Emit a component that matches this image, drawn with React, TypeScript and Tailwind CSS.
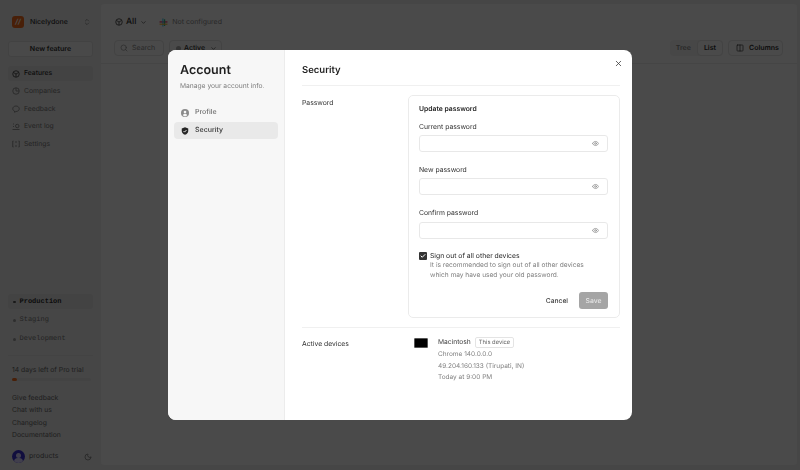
import { ChevronDown, ChevronsUpDown, Columns2, Eye, Moon, Search, X, Check } from 'lucide-react';

const navItems = ['Features', 'Companies', 'Feedback', 'Event log', 'Settings'];
const envItems = ['Production', 'Staging', 'Development'];
const helpLinks = ['Give feedback', 'Chat with us', 'Changelog', 'Documentation'];

function BoxIcon({ className }: { className?: string }) {
  return (
    <svg viewBox="0 0 16 16" fill="none" stroke="currentColor" strokeWidth="1.5" className={className}>
      <circle cx="8" cy="8" r="6.5" />
      <path d="M8 8 3 5M8 8l5-3M8 8v6" />
    </svg>
  );
}

function NavIcon({ index }: { index: number }) {
  const cls = 'h-[8px] w-[8px] shrink-0';
  if (index === 0) return <BoxIcon className={cls} />;
  if (index === 1)
    return (
      <svg viewBox="0 0 16 16" fill="none" stroke="currentColor" strokeWidth="1.5" className={cls}>
        <circle cx="8" cy="8" r="6.5" />
        <path d="M8 2v6h6" />
      </svg>
    );
  if (index === 2)
    return (
      <svg viewBox="0 0 16 16" fill="none" stroke="currentColor" strokeWidth="1.5" className={cls}>
        <path d="M8 2c3.6 0 6.5 2.4 6.5 5.6S11.6 13 8 13l-3 1.5v-2.3C2.800 11.200 1.500 9.600 1.500 7.600 1.500 4.400 4.400 2 8 2Z" />
      </svg>
    );
  if (index === 3)
    return (
      <svg viewBox="0 0 16 16" fill="none" stroke="currentColor" strokeWidth="1.5" className={cls}>
        <path d="M2 2h2M2 7h2M1 13h14" />
        <circle cx="10.500" cy="6" r="3.500" />
      </svg>
    );
  return (
    <svg viewBox="0 0 16 16" fill="none" stroke="currentColor" strokeWidth="1.500" className={cls}>
      <path d="M3 2H1.500v12H3M13 2h1.500v12H13M8 2v4M8 10v4" />
    </svg>
  );
}

function PasswordField({ label }: { label: string }) {
  return (
    <div className="flex flex-col">
      <div className="text-[6.800px] leading-[11px] text-[#303030]">{label}</div>
      <div className="mt-[3.500px] flex h-[17px] items-center justify-end rounded-[3px] border border-[#e8e8e8] bg-white pr-[8px]">
        <Eye className="h-[7px] w-[7px] text-[#8a8a8a]" strokeWidth={2.5} />
      </div>
    </div>
  );
}

export default function App() {
  return (
    <div className="relative flex h-[470px] w-[800px] overflow-hidden bg-[#eaeaea] font-['Inter',sans-serif] antialiased [text-rendering:geometricPrecision]">
      {/* Sidebar */}
      <aside className="flex w-[101px] shrink-0 flex-col px-[8px] text-[#2f2f2f]">
        <div className="mt-[16px] flex h-[12px] items-center pl-[4px] pr-[2px]">
          <div className="flex h-[12px] w-[12px] items-center justify-center rounded-[3px] bg-[#f26a1b] text-[7px] font-bold italic text-white">
            //
          </div>
          <span className="ml-[6px] text-[7px] font-medium">Nicelydone</span>
          <ChevronsUpDown className="ml-auto h-[8px] w-[8px] text-[#777]" />
        </div>
        <div className="mt-[13px] flex h-[16px] items-center justify-center rounded-[3px] border border-[#dcdcdc] bg-[#f6f6f6] text-[7px] font-semibold">
          New feature
        </div>
        <nav className="mt-[9px] flex flex-col">
          {navItems.map((item, i) => (
            <div
              key={item}
              className={`flex h-[15px] items-center gap-[4px] rounded-[3px] pl-[4px] text-[6.800px] ${i === 0 ? 'bg-[#e0e0e0] font-medium text-[#2f2f2f]' : 'text-[#777]'} ${i > 0 ? 'mt-[2.700px]' : ''}`}
            >
              <NavIcon index={i} />
              {item}
            </div>
          ))}
        </nav>
        <div className="mt-auto flex flex-col">
          {envItems.map((env, i) => (
            <div
              key={env}
              className={`flex h-[15px] items-center gap-[4px] rounded-[3px] pl-[5px] font-['Liberation_Mono',monospace] text-[7px] ${i === 0 ? 'bg-[#e0e0e0] font-bold text-[#2f2f2f]' : 'text-[#777]'} ${i > 0 ? 'mt-[3.700px]' : ''}`}
            >
              <span className={`h-[2.500px] w-[2.500px] rounded-full ${i === 0 ? 'bg-[#555]' : 'bg-[#999]'}`} />
              {env}
            </div>
          ))}
          <div className="mt-[8px] border-t border-[#e2e2e2]" />
          <div className="mt-[9.500px] pl-[4px] text-[6.800px] leading-[10px] text-[#666]">14 days left of Pro trial</div>
          <div className="ml-[4px] mr-[2px] mt-[2.500px] h-[3px] rounded-full bg-[#e2e2e2]">
            <div className="h-[3px] w-[5px] rounded-full bg-[#f26a1b]" />
          </div>
          <div className="mt-[12px] flex flex-col gap-[2.400px] pl-[4px]">
            {helpLinks.map((link) => (
              <div key={link} className="text-[6.800px] leading-[10px] text-[#666]">
                {link}
              </div>
            ))}
          </div>
          <div className="mb-[7px] mt-[10px] flex h-[13px] items-center pl-[4px] pr-[1px]">
            <span className="relative h-[13px] w-[13px] overflow-hidden rounded-full bg-[#3b2fd0]">
              <span className="absolute left-[4px] top-[2.500px] h-[5px] w-[5px] rounded-full bg-[#d9d4ff]" />
              <span className="absolute left-[2px] top-[8px] h-[8px] w-[9px] rounded-full bg-[#d9d4ff]" />
            </span>
            <span className="ml-[4px] text-[7px] text-[#666]">products</span>
            <Moon className="ml-auto h-[8px] w-[8px] text-[#666]" />
          </div>
        </div>
      </aside>

      {/* Main panel */}
      <main className="mb-[5px] mr-[3px] mt-[4px] flex flex-1 flex-col rounded-[3px] bg-[#f7f7f7] text-[#2f2f2f]">
        <div className="mt-[12px] flex h-[12px] items-center pl-[14px]">
          <BoxIcon className="h-[8px] w-[8px]" />
          <span className="ml-[3px] text-[8.500px] font-medium">All</span>
          <ChevronDown className="ml-[4px] h-[7px] w-[7px]" />
          <svg viewBox="0 0 16 16" className="ml-[12px] h-[9px] w-[9px]">
            <path d="M1 6h14v2H1z" fill="#e01e5a" />
            <path d="M6 1h2v14H6z" fill="#36c5f0" />
            <path d="M9 2h2v12H9z" fill="#2eb67d" />
            <path d="M1 10h14v2H1z" fill="#ecb22e" />
          </svg>
          <span className="ml-[4px] text-[7px] text-[#8a8a8a]">Not configured</span>
        </div>
        <div className="mt-[12px] flex h-[16px] items-center pl-[13px] pr-[14px]">
          <div className="flex h-[16px] w-[50px] items-center gap-[4px] rounded-[4px] border border-[#e0e0e0] pl-[5px] text-[7px] text-[#8a8a8a]">
            <Search className="h-[8px] w-[8px]" />
            Search
          </div>
          <div className="ml-[5px] flex h-[16px] w-[53px] items-center gap-[3px] rounded-[4px] border border-[#e0e0e0] pl-[6px] text-[7px] font-medium">
            <span className="h-[5px] w-[5px] rounded-full bg-[#aaa]" />
            Active
            <ChevronDown className="ml-[2px] h-[7px] w-[7px]" />
          </div>
          <div className="ml-auto flex h-[16px] items-center rounded-[4px] bg-[#eeeeee] text-[7px] font-semibold">
            <span className="px-[6px] text-[#8a8a8a]">Tree</span>
            <span className="flex h-[16px] items-center rounded-[4px] border border-[#e0e0e0] bg-[#f7f7f7] px-[6px]">List</span>
          </div>
          <div className="ml-[5px] flex h-[16px] w-[55px] items-center gap-[5px] rounded-[4px] border border-[#e0e0e0] pl-[7px] text-[7px] font-semibold">
            <Columns2 className="h-[8px] w-[8px]" />
            Columns
          </div>
        </div>
        <div className="mt-[7px] border-t border-[#e8e8e8]" />
      </main>

      {/* Dimmed backdrop */}
      <div className="absolute inset-0 bg-black/70 backdrop-blur-[0.5px]" />

      {/* Account dialog */}
      <div className="absolute left-[168px] top-[50px] flex h-[370px] w-[464px] overflow-hidden rounded-[8px] bg-white text-[#1f1f1f] [will-change:transform]">
        <div className="flex w-[117px] shrink-0 flex-col border-r border-[#ececec] bg-[#f7f7f7] px-[6px]">
          <div className="ml-[6px] mt-[12px] text-[12.500px] font-semibold leading-[18px]">Account</div>
          <div className="ml-[6px] mt-[1px] text-[6.700px] leading-[10px] text-[#7c7c7c]">Manage your account info.</div>
          <div className="mt-[13px] flex h-[17px] items-center gap-[6px] pl-[7px] text-[7px] font-medium text-[#6f6f6f]">
            <svg viewBox="0 0 16 16" className="h-[8px] w-[8px]">
              <circle cx="8" cy="8" r="8" fill="#8b8b8b" />
              <circle cx="8" cy="6" r="2.600" fill="#f7f7f7" />
              <path d="M3.500 12.500c1-2 2.500-3 4.500-3s3.500 1 4.500 3a6.300 6.300 0 0 1-9 0Z" fill="#f7f7f7" />
            </svg>
            Profile
          </div>
          <div className="mt-[1px] flex h-[17px] items-center gap-[6px] rounded-[4px] bg-[#e9e9e9] pl-[7px] text-[7px] font-medium text-[#333]">
            <svg viewBox="0 0 16 16" className="h-[8px] w-[8px]">
              <path d="M8 0.500 14.500 3v5c0 3.700-2.700 6.300-6.500 7.500C4.200 14.300 1.500 11.700 1.500 8V3Z" fill="#262626" />
              <path d="m5 8 2.200 2.200L11 6" fill="none" stroke="#f0f0f0" strokeWidth="1.800" />
            </svg>
            Security
          </div>
        </div>

        <div className="relative flex flex-1 flex-col pl-[17px] pr-[12px]">
          <X className="absolute right-[9px] top-[9px] h-[9px] w-[9px] text-[#333]" strokeWidth={2} />
          <div className="mt-[15px] text-[9.500px] font-semibold leading-[12px]">Security</div>
          <div className="mt-[8px] border-t border-[#f0f0f0]" />
          <div className="mt-[9px] flex">
            <div className="mt-[2px] w-[106px] shrink-0 text-[6.800px] leading-[11px] text-[#303030]">Password</div>
            <div className="flex h-[223px] flex-1 flex-col rounded-[5px] border border-[#ebebeb] pl-[10px] pr-[11px]">
              <div className="mt-[6.500px] text-[6.800px] font-semibold leading-[11px]">Update password</div>
              <div className="mt-[7px] flex flex-col gap-[11.900px]">
                <PasswordField label="Current password" />
                <PasswordField label="New password" />
                <PasswordField label="Confirm password" />
              </div>
              <div className="mt-[12px] flex">
                <span className="-ml-[0.500px] mt-[1px] flex h-[8px] w-[8px] items-center justify-center rounded-[1px] bg-[#333]">
                  <Check className="h-[6px] w-[6px] text-white" strokeWidth={4} />
                </span>
                <div className="ml-[3.500px]">
                  <div className="text-[6.800px] leading-[10px] text-[#262626]">Sign out of all other devices</div>
                  <div className="mt-[0.500px] text-[6.600px] leading-[9.500px] text-[#808080]">
                    It is recommended to sign out of all other devices
                    <br />
                    which may have used your old password.
                  </div>
                </div>
              </div>
              <div className="mt-[12px] flex items-center justify-end">
                <span className="text-[6.700px] font-medium text-[#3c3c3c]">Cancel</span>
                <span className="ml-[11px] flex h-[17px] w-[29px] items-center justify-center rounded-[3px] bg-[#a5a5a5] text-[6.800px] font-medium text-[#e5e5e5]">
                  Save
                </span>
              </div>
            </div>
          </div>
          <div className="mt-[9px] border-t border-[#f0f0f0]" />
          <div className="mt-[9px] flex">
            <div className="mt-[0.500px] w-[112px] shrink-0 text-[6.800px] leading-[11px] text-[#303030]">Active devices</div>
            <div className="mt-[1px] h-[10px] w-[14px] shrink-0 rounded-[1px] border border-[#555] bg-black" />
            <div className="ml-[10px] flex flex-col">
              <div className="flex items-center gap-[4px]">
                <span className="text-[6.700px] leading-[11px] text-[#3c3c3c]">Macintosh</span>
                <span className="rounded-[2px] border border-[#e4e4e4] px-[3px] text-[5.800px] leading-[9px] text-[#5c5c5c]">This device</span>
              </div>
              <div className="mt-[1px] flex flex-col text-[6.500px] leading-[11.700px] text-[#808080]">
                <span>Chrome 140.0.0.0</span>
                <span>49.204.160.133 (Tirupati, IN)</span>
                <span>Today at 9:00 PM</span>
              </div>
            </div>
          </div>
        </div>
      </div>
    </div>
  );
}
